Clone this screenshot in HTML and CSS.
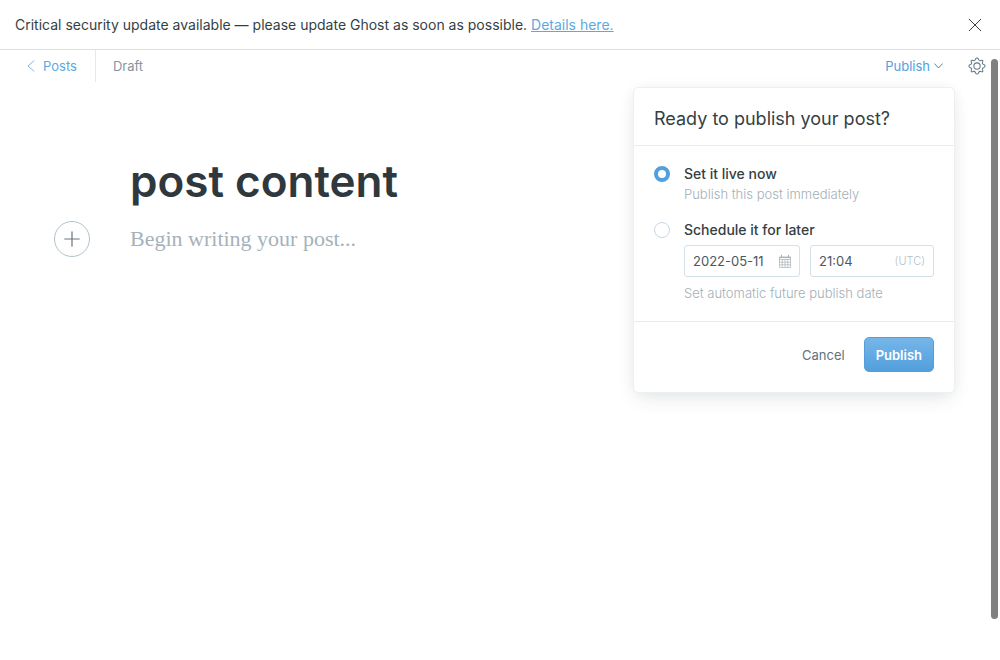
FILE: index.html
```html
<!DOCTYPE html>
<html lang="en">
<head>
<meta charset="utf-8">
<title>post content</title>
<meta name="viewport" content="width=device-width, initial-scale=1">
<link rel="stylesheet" href="styles.css">
</head>
<body>
<aside class="alert">
  <p class="alert-text">Critical security update available — please update Ghost as soon as possible. <a class="alert-link" href="#">Details here.</a></p>
  <button class="icon-button" type="button" aria-label="Close">
    <svg width="14" height="14" viewBox="0 0 14 14" fill="none" stroke="#394047" stroke-linecap="round"><path d="M1.2 1.2l11.6 11.6M12.8 1.2L1.2 12.8"/></svg>
  </button>
</aside>

<header class="editor-header">
  <a class="back-link" href="#">
    <svg width="8" height="12" viewBox="0 0 8 12" fill="none" stroke="currentColor" stroke-width=".8" stroke-linecap="round" stroke-linejoin="round"><path d="M7 .7L1 6l6 5.3"/></svg>
    Posts
  </a>
  <span class="post-status">Draft</span>
  <div class="publish-menu">
    <button class="publish-trigger" type="button" aria-expanded="true">
      Publish
      <svg width="9" height="6" viewBox="0 0 9 6" fill="none" stroke="#4d88b5" stroke-linecap="round" stroke-linejoin="round"><path d="M.6 .8l3.900 4.200L8.400 .8"/></svg>
    </button>
    <form class="publish-popover">
      <h2 class="popover-title">Ready to publish your post?</h2>
      <div class="popover-options">
        <div class="option">
          <input class="radio" type="radio" name="when" id="now" checked>
          <div class="option-body">
            <label class="option-label" for="now">Set it live now</label>
            <p class="option-hint">Publish this post immediately</p>
          </div>
        </div>
        <div class="option">
          <input class="radio" type="radio" name="when" id="later">
          <div class="option-body">
            <label class="option-label" for="later">Schedule it for later</label>
            <div class="date-time">
              <div class="field field-date">
                <input class="field-input" type="text" value="2022-05-11" aria-label="Date">
                <svg width="12" height="14" viewBox="0 0 12 14" fill="none" stroke="#a9b3b9"><path d="M.5 3v10.500h11V3zM0 5.500h12M0 8.200h12M0 10.800h12M3.200 5v8.500M6 5v8.500M8.800 5v8.500" stroke-width=".7"/><path d="M0 3.500h12" stroke-width="1.200"/><path d="M2.500 .8v2.400M9.500 .8v2.400"/></svg>
              </div>
              <div class="field field-time">
                <input class="field-input" type="text" value="21:04" aria-label="Time">
                <span class="timezone">(UTC)</span>
              </div>
            </div>
            <p class="option-hint">Set automatic future publish date</p>
          </div>
        </div>
      </div>
      <footer class="popover-footer">
        <button class="cancel" type="button">Cancel</button>
        <button class="submit" type="button">Publish</button>
      </footer>
    </form>
  </div>
  <button class="icon-button" type="button" aria-label="Settings">
    <svg width="18" height="18" viewBox="0 0 24 24" fill="none" stroke="#657a87" stroke-width="1.400" stroke-linejoin="round"><circle cx="12" cy="12" r="4.200"/><path d="M13.700 2.400l.5 1.100a2.300 2.300 0 0 0 3 1.200l1.100-.4a1.200 1.200 0 0 1 1.500 1.500l-.5 1.100a2.300 2.300 0 0 0 1.300 3l1.100.4a1.900 1.900 0 0 1 0 3.400l-1.100.5a2.300 2.300 0 0 0-1.300 3l.5 1.100a1.200 1.200 0 0 1-1.500 1.500l-1.100-.4a2.300 2.300 0 0 0-3 1.200l-.5 1.100a1.900 1.900 0 0 1-3.400 0l-.5-1.100a2.300 2.300 0 0 0-3-1.200l-1.100.4a1.200 1.200 0 0 1-1.500-1.500l.5-1.100a2.300 2.300 0 0 0-1.300-3l-1.100-.5a1.900 1.900 0 0 1 0-3.400l1.100-.4a2.300 2.300 0 0 0 1.300-3l-.5-1.100a1.200 1.200 0 0 1 1.500-1.500l1.100.4a2.300 2.300 0 0 0 3-1.200l.5-1.100a1.900 1.900 0 0 1 3.400 0z"/></svg>
  </button>
</header>

<main class="editor">
  <h1 class="post-title">post content</h1>
  <div class="post-body">
    <button class="add-card" type="button" aria-label="Add a card">
      <svg width="16" height="16" viewBox="0 0 16 16" fill="none" stroke="#68757d" stroke-width="1.200" stroke-linecap="round"><path d="M8 .8v14.400M.8 8h14.400"/></svg>
    </button>
    <p class="placeholder">Begin writing your post...</p>
  </div>
</main>
<div class="scroll-thumb"></div>
</body>
</html>
```

FILE: styles.css
```css
* {
  box-sizing: border-box;
}

body {
  min-height: 100vh;
  margin: 0;
  background: #fff;
  color: #343f44;
  font-family: Inter, "Liberation Sans", sans-serif;
  font-size: 13px;
  line-height: 20px;
}

h1, h2, p {
  margin: 0;
}

button {
  padding: 0;
  border: 0;
  background: none;
  color: inherit;
  font: inherit;
  cursor: pointer;
}

svg {
  display: block;
  flex: none;
}

.icon-button {
  display: flex;
}

.alert {
  display: flex;
  align-items: center;
  justify-content: space-between;
  padding: 15px 18px 14px 15px;
  border-bottom: 1px solid #dddfe1;
}

.alert-text {
  font-size: 14px;
}

.alert-link {
  color: #5ba9e3;
}

.editor-header {
  display: flex;
  align-items: center;
  height: 32px;
  padding: 0 14px 0 27px;
}

.back-link {
  display: flex;
  align-items: center;
  align-self: stretch;
  gap: 8px;
  padding-right: 18px;
  border-right: 1px solid #e3e9ed;
  color: #5ba9e3;
  text-decoration: none;
}

.post-status {
  padding-left: 17px;
  color: #8496a3;
}

.publish-menu {
  position: relative;
  margin-left: auto;
  margin-right: 25px;
}

.publish-trigger {
  display: flex;
  align-items: center;
  gap: 4px;
  color: #4fa0e0;
}

.publish-popover {
  position: absolute;
  z-index: 1;
  top: 31px;
  right: -12px;
  width: 322px;
  border: 1px solid #edf0f2;
  border-radius: 5px;
  background: #fff;
  box-shadow: 0 8px 20px -4px rgba(39, 56, 65, 0.12), 0 0 14px rgba(39, 56, 65, 0.04);
}

.popover-title {
  padding: 19px 20px 14px;
  border-bottom: 1px solid #e9edf0;
  font-size: 18px;
  font-weight: 400;
  line-height: 24px;
}

.popover-options {
  display: grid;
  gap: 16px;
  padding: 18px 20px;
}

.option {
  display: flex;
  gap: 14px;
}

.radio {
  flex: none;
  width: 16px;
  height: 16px;
  margin: 2px 0 0;
  border: 1px solid #c5d8e6;
  border-radius: 50%;
  background: #fff;
  appearance: none;
}

.radio:checked {
  border: 4px solid #529fdd;
}

.option-body {
  flex: 1;
  min-width: 0;
}

.option-label {
  display: block;
  font-size: 14px;
  font-weight: 500;
}

.option-hint {
  color: #a3afb7;
  font-weight: 300;
}

.date-time {
  display: grid;
  grid-template-columns: 116px 1fr;
  gap: 10px;
  margin: 5px 0 6px;
}

.field {
  display: flex;
  align-items: center;
  height: 32px;
  padding: 0 8px;
  border: 1px solid #d5e1e9;
  border-radius: 3px;
}

.field-input {
  flex: 1;
  width: 0;
  min-width: 0;
  padding: 0;
  border: 0;
  outline: 0;
  background: none;
  color: #4b585f;
  font: inherit;
}

.timezone {
  color: #b6bfc5;
  font-size: 11px;
  font-weight: 300;
}

.popover-footer {
  display: flex;
  align-items: center;
  justify-content: flex-end;
  gap: 19px;
  padding: 15px 20px 20px;
  border-top: 1px solid #e5ebef;
}

.cancel {
  color: #62717b;
}

.submit {
  height: 35px;
  padding: 0 11px;
  border: 1px solid #569ed7;
  border-radius: 5px;
  background: linear-gradient(#76b6e9, #529fdd);
  color: #fff;
  font-weight: 600;
}

.editor {
  padding: 71px 54px;
}

.post-title {
  padding-left: 76px;
  color: #2f383d;
  font-size: 44px;
  font-weight: 600;
  line-height: 56px;
}

.post-body {
  display: flex;
  align-items: center;
  gap: 40px;
  margin-top: 12px;
}

.add-card {
  display: grid;
  place-items: center;
  width: 36px;
  height: 36px;
  border: 1px solid #b1c1ca;
  border-radius: 50%;
}

.placeholder {
  color: #a5b2ba;
  font-family: Georgia, "Liberation Serif", serif;
  font-size: 22px;
  line-height: 32px;
}

.scroll-thumb {
  position: fixed;
  top: 59px;
  right: 2px;
  bottom: 41px;
  width: 7px;
  border-radius: 4px;
  background: #808080;
}
```
